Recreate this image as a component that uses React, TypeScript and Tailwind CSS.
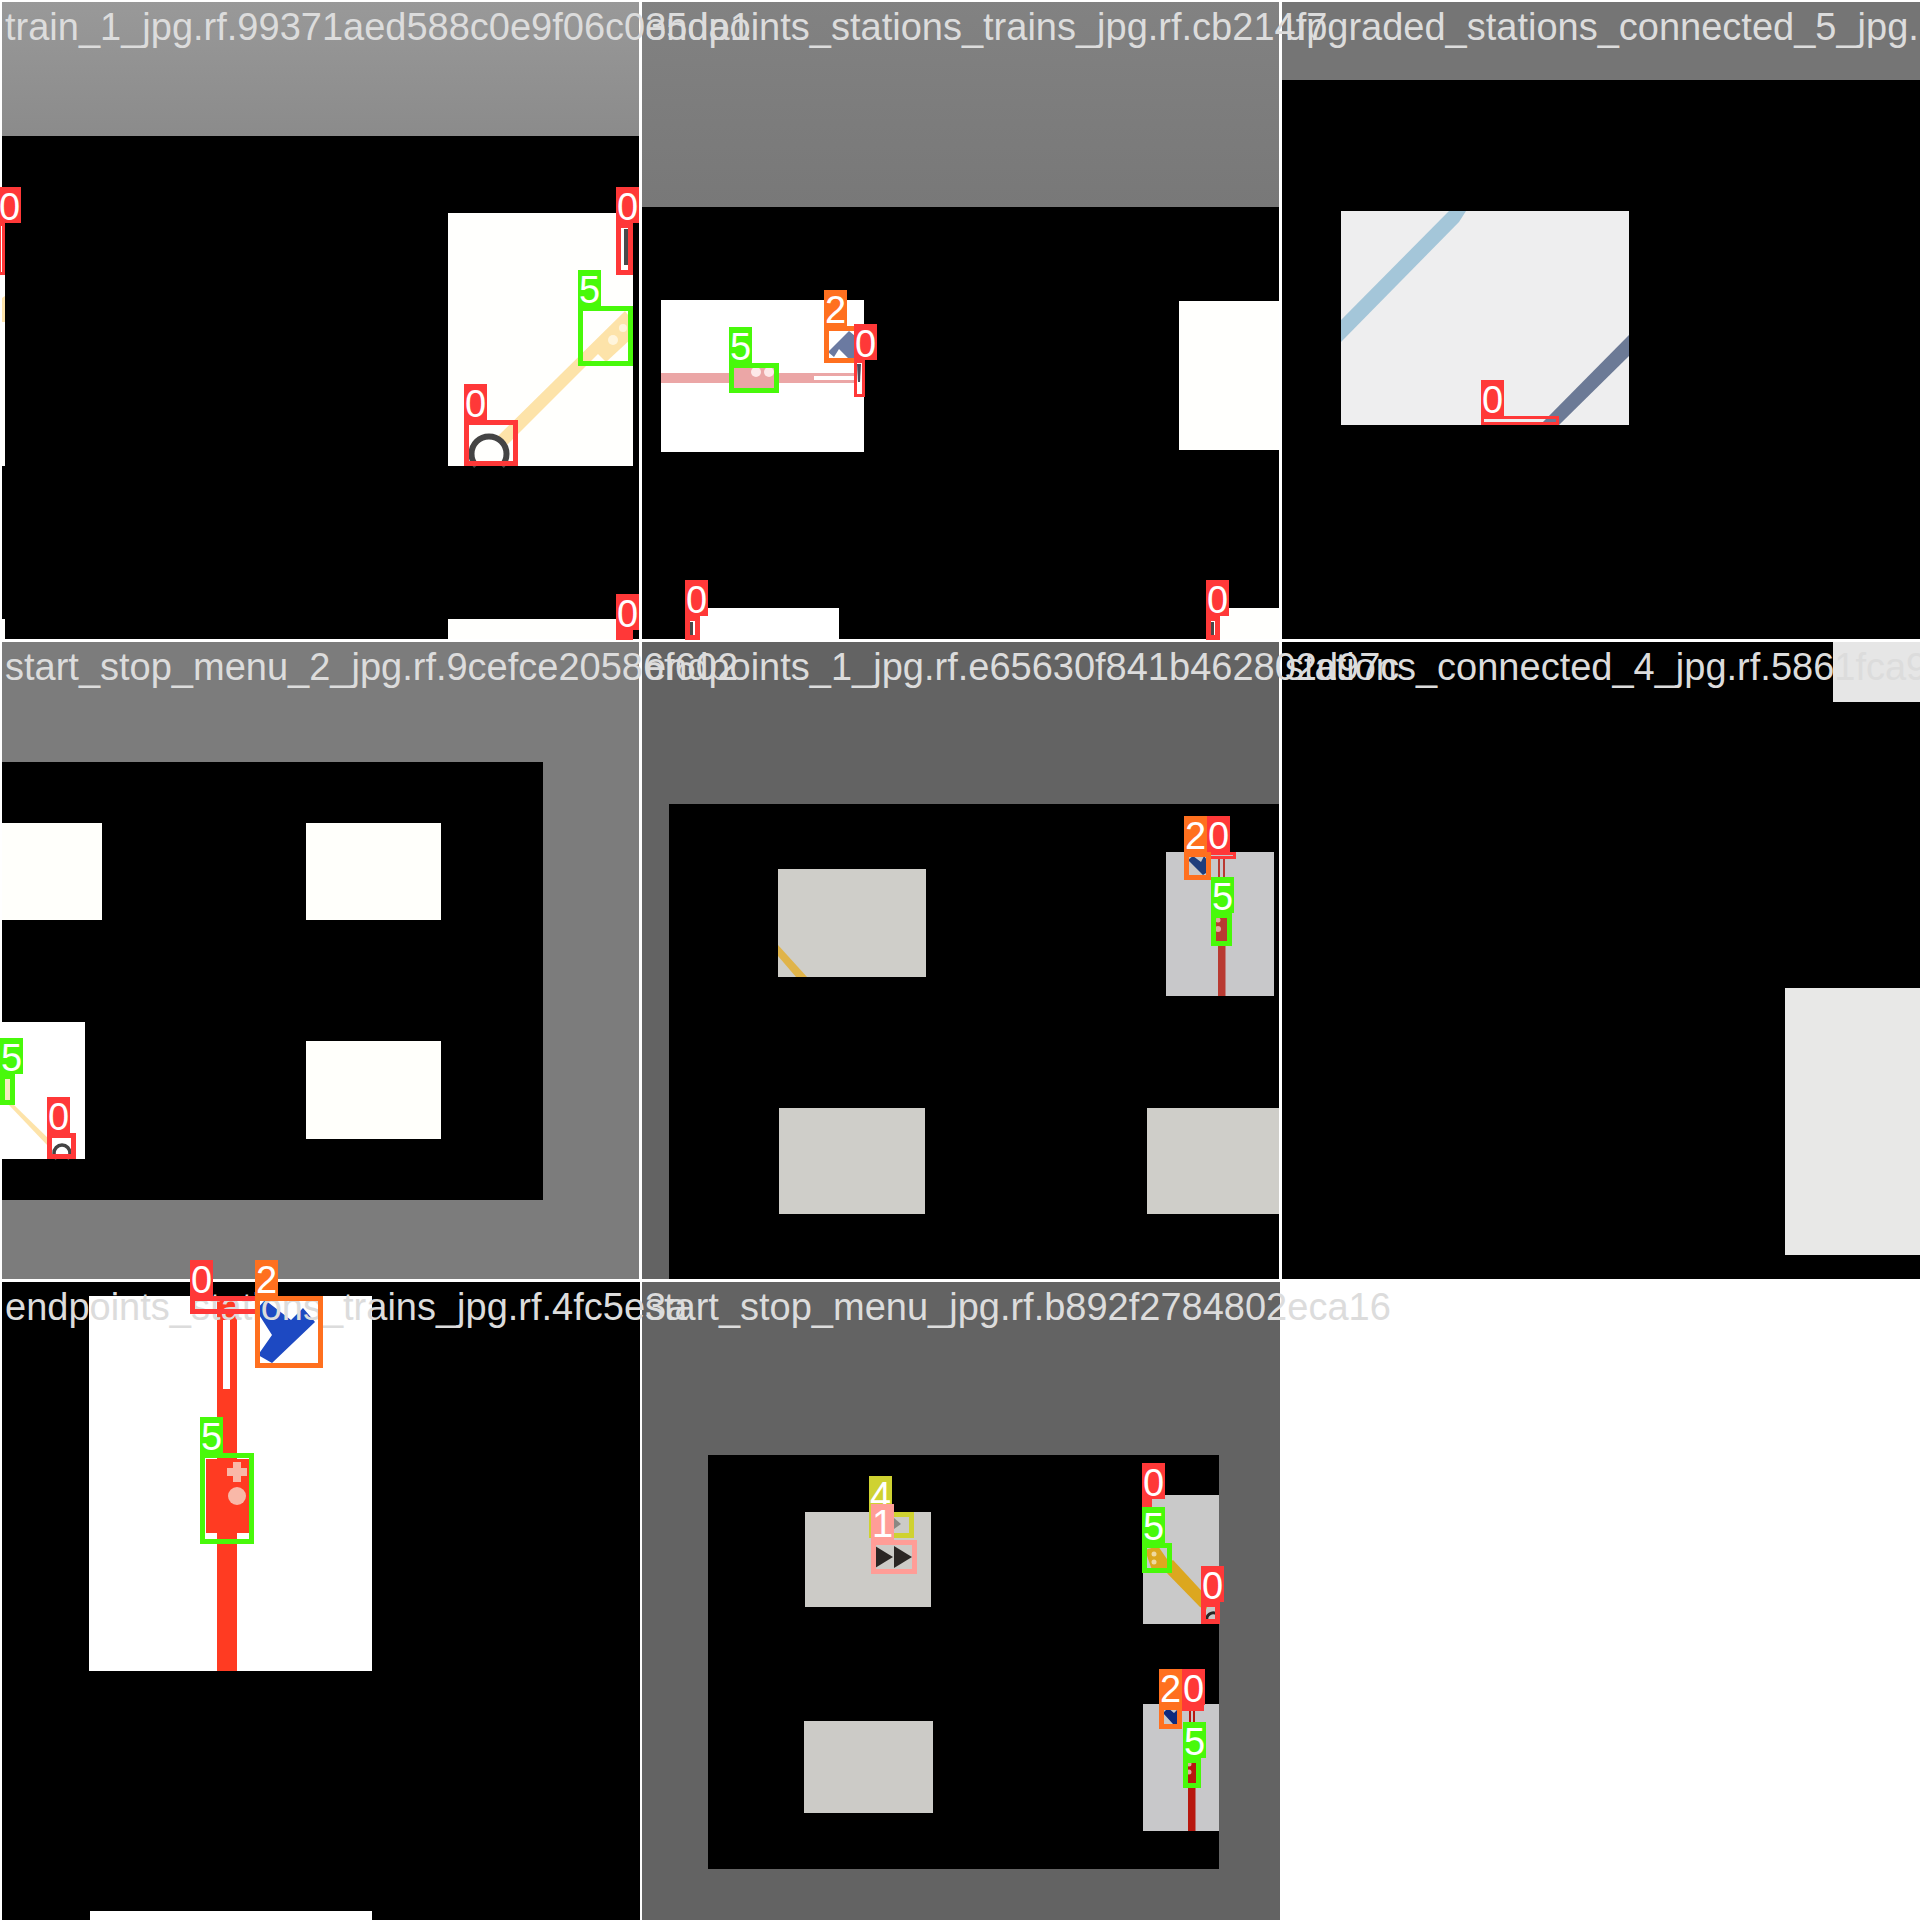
const RED = { box: 'border-[#ff3838]', tag: 'bg-[#ff3838]' };
const GREEN = { box: 'border-[#48f90a]', tag: 'bg-[#48f90a]' };
const ORANGE = { box: 'border-[#ff701f]', tag: 'bg-[#ff701f]' };
const YELLOW = { box: 'border-[#cfd231]', tag: 'bg-[#cfd231]' };
const PINK = { box: 'border-[#ff9d97]', tag: 'bg-[#ff9d97]' };

type Tone = { box: string; tag: string };

function Det({ n, tone, className, thin }: { n: number; tone: Tone; className: string; thin?: boolean }) {
  const wall = thin ? 'border-[3px]' : 'border-[5px]';
  const place = thin ? 'left-[-3px] top-[-39px]' : 'left-[-5px] top-[-41px]';
  return (
    <div className={`absolute ${wall} ${tone.box} ${className}`}>
      <span className={`absolute h-[36px] w-[23px] text-center text-[38px] leading-[41px] text-white ${place} ${tone.tag}`}>
        {n}
      </span>
    </div>
  );
}

function Title({ children }: { children: string }) {
  return (
    <div className="absolute left-[5px] top-[7px] whitespace-nowrap text-[38px] leading-[40px] text-[#dcdcdc]">
      {children}
    </div>
  );
}

function Sheet({ className }: { className: string }) {
  return <div className={`absolute ${className}`} />;
}

function Paint({ children }: { children: React.ReactNode }) {
  return (
    <svg className="absolute left-0 top-0 h-[640px] w-[640px]" viewBox="0 0 640 640">
      {children}
    </svg>
  );
}

function Cell({ picture, marks, frame }: { picture: React.ReactNode; marks?: React.ReactNode; frame: string }) {
  return (
    <div className="relative h-[640px] w-[640px]">
      <div className="absolute inset-0 overflow-hidden bg-black">
        {picture}
        <div className={`absolute inset-0 border-l-2 border-t-2 border-white ${frame}`} />
      </div>
      <div className="absolute inset-0 z-10">{marks}</div>
    </div>
  );
}

function TrainOne() {
  return (
    <Cell
      frame="border-r border-b"
      picture={
        <>
          <Sheet className="left-0 top-0 h-[136px] w-full bg-gradient-to-b from-[#999999] to-[#8b8b8b]" />
          <Sheet className="left-[448px] top-[213px] h-[253px] w-[185px] bg-[#fffffd]" />
          <Sheet className="left-0 top-[275px] h-[191px] w-[5px] bg-[#fffffd]" />
          <Sheet className="left-[448px] top-[619px] h-[21px] w-[185px] bg-[#fffffd]" />
          <Sheet className="left-0 top-[619px] h-[21px] w-[5px] bg-[#fffffd]" />
          <Paint>
            <path d="M2 298 L5 296 L5 322 L2 322 Z" fill="#fde3a9" />
            <path d="M498 436 L625 311 L632 320 L506 446 Z" fill="#fde3a9" />
            <path d="M594 350 L626 316 L632 320 L632 338 L606 362 Z" fill="#fde3a9" />
            <circle cx="613" cy="340" r="5" fill="#fff5dc" />
            <circle cx="623" cy="328" r="4" fill="#fff5dc" />
            <path d="M476.3 466 A17.5 17.5 0 1 1 501.7 466" fill="#fffffd" stroke="#444444" strokeWidth="6" />
            <rect x="624" y="229" width="5" height="36" fill="#4a4a4a" />
            <rect x="622" y="631" width="9" height="3" fill="#fffffd" />
          </Paint>
        </>
      }
      marks={
        <>
          <Title>train_1_jpg.rf.99371aed588c0e9f06c035da1</Title>
          <Det n={0} tone={RED} className="left-[464px] top-[420px] h-[46px] w-[54px]" />
          <Det n={5} tone={GREEN} className="left-[578px] top-[306px] h-[60px] w-[55px]" />
          <Det n={0} tone={RED} className="left-[616px] top-[223px] h-[52px] w-[17px]" />
          <Det n={0} tone={RED} thin className="left-[-2px] top-[223px] h-[52px] w-[7px]" />
          <Det n={0} tone={RED} className="left-[616px] top-[630px] h-[10px] w-[17px]" />
        </>
      }
    />
  );
}

function EndpointsStations() {
  return (
    <Cell
      frame="border-r border-b"
      picture={
        <>
          <Sheet className="left-0 top-0 h-[207px] w-full bg-gradient-to-b from-[#828282] to-[#787878]" />
          <Sheet className="left-[21px] top-[300px] h-[152px] w-[203px] bg-white" />
          <Sheet className="left-[539px] top-[301px] h-[149px] w-[101px] bg-[#fffffd]" />
          <Sheet className="left-[49px] top-[608px] h-[32px] w-[150px] bg-white" />
          <Sheet className="left-[570px] top-[608px] h-[32px] w-[70px] bg-[#fffffd]" />
          <Paint>
            <rect x="21" y="373" width="193" height="10" fill="#eba6a6" />
            <rect x="94" y="367" width="41" height="22" fill="#eba6a6" />
            <rect x="174" y="376" width="40" height="4" fill="#ffffff" />
            <circle cx="116" cy="372" r="5" fill="#fde8e8" />
            <circle cx="129" cy="372" r="5" fill="#fde8e8" />
            <path d="M188 352 L209 331 L220 340 L218 358 L208 358 L199 349 L194 357 Z" fill="#6b7aa1" />
            <rect x="216" y="362" width="7" height="33" fill="#ffffff" />
            <path d="M217 364 L221 364 L220 382 L218 382 Z" fill="#4a4a5a" />
            <rect x="50" y="622" width="3" height="14" fill="#4a4a4a" />
            <rect x="571" y="622" width="3" height="14" fill="#4a4a4a" />
          </Paint>
        </>
      }
      marks={
        <>
          <Title>endpoints_stations_trains_jpg.rf.cb214f7</Title>
          <Det n={5} tone={GREEN} className="left-[89px] top-[363px] h-[30px] w-[50px]" />
          <Det n={2} tone={ORANGE} className="left-[184px] top-[326px] h-[37px] w-[41px]" />
          <Det n={0} tone={RED} thin className="left-[214px] top-[360px] h-[37px] w-[11px]" />
          <Det n={0} tone={RED} className="left-[45px] top-[616px] h-[24px] w-[15px]" />
          <Det n={0} tone={RED} className="left-[566px] top-[616px] h-[24px] w-[14px]" />
        </>
      }
    />
  );
}

function UpgradedFive() {
  return (
    <Cell
      frame="border-b"
      picture={
        <>
          <Sheet className="left-0 top-0 h-[80px] w-full bg-[#757575]" />
          <Sheet className="left-[61px] top-[211px] h-[214px] w-[288px] bg-[#eeeeef]" />
          <Paint>
            <path d="M61 320 L169 211 L186 211 L179 222 L61 342 Z" fill="#a4c6d9" />
            <path d="M349 335 L349 356 L279 425 L260 425 Z" fill="#6c7a96" />
          </Paint>
        </>
      }
      marks={
        <>
          <Title>upgraded_stations_connected_5_jpg.</Title>
          <Det n={0} tone={RED} thin className="left-[201px] top-[416px] h-[9px] w-[78px]" />
        </>
      }
    />
  );
}

function StartStopTwo() {
  return (
    <Cell
      frame="border-r border-b"
      picture={
        <>
          <Sheet className="inset-0 bg-[#7c7c7c]" />
          <Sheet className="left-0 top-[122px] h-[438px] w-[543px] bg-black" />
          <Sheet className="left-0 top-[183px] h-[97px] w-[102px] bg-[#fffffb]" />
          <Sheet className="left-[306px] top-[183px] h-[97px] w-[135px] bg-[#fffffb]" />
          <Sheet className="left-[306px] top-[401px] h-[98px] w-[135px] bg-[#fffffb]" />
          <Sheet className="left-0 top-[382px] h-[137px] w-[85px] bg-white" />
          <Paint>
            <path d="M8 464 L13 464 L52 502 L48 506 Z" fill="#fde3a9" />
            <rect x="5" y="438" width="7" height="23" fill="#f3ecc0" />
            <path d="M56.7 519 A8 8 0 1 1 67.3 519" fill="#ffffff" stroke="#444444" strokeWidth="3.5" />
          </Paint>
        </>
      }
      marks={
        <>
          <Title>start_stop_menu_2_jpg.rf.9cefce20586f602</Title>
          <Det n={5} tone={GREEN} className="left-0 top-[434px] h-[31px] w-[15px]" />
          <Det n={0} tone={RED} className="left-[47px] top-[493px] h-[26px] w-[29px]" />
        </>
      }
    />
  );
}

function EndpointsOne() {
  return (
    <Cell
      frame="border-r border-b"
      picture={
        <>
          <Sheet className="left-0 top-0 h-full w-[29px] bg-[#636363]" />
          <Sheet className="left-0 top-0 h-[164px] w-full bg-[#636363]" />
          <Sheet className="left-[138px] top-[229px] h-[108px] w-[148px] bg-[#cfcec9]" />
          <Sheet className="left-[139px] top-[468px] h-[106px] w-[146px] bg-[#cfcec9]" />
          <Sheet className="left-[507px] top-[468px] h-[106px] w-[133px] bg-[#cfcec9]" />
          <Sheet className="left-[526px] top-[212px] h-[144px] w-[108px] bg-[#c8c8ca]" />
          <Paint>
            <path d="M138 305 L138 316 L156 337 L167 337 Z" fill="#e0b44a" />
            <rect x="578" y="219" width="2" height="20" fill="#b93a32" />
            <rect x="583" y="219" width="2" height="20" fill="#b93a32" />
            <rect x="578" y="300" width="7.5" height="56" fill="#b93a32" />
            <rect x="575" y="277" width="13" height="27" fill="#b93a32" />
            <circle cx="578" cy="280" r="2.5" fill="#dfa9a0" />
            <circle cx="578" cy="289" r="3" fill="#dfa9a0" />
            <path d="M548 220 L553 216 L561 222 L564 216 L567 220 L566 233 L563 235 Z" fill="#1f3d7c" />
          </Paint>
        </>
      }
      marks={
        <>
          <Title>endpoints_1_jpg.rf.e65630f841b462802d97c</Title>
          <Det n={0} tone={RED} thin className="left-[567px] top-[212px] h-[7px] w-[29px]" />
          <Det n={2} tone={ORANGE} className="left-[544px] top-[212px] h-[28px] w-[27px]" />
          <Det n={5} tone={GREEN} className="left-[571px] top-[273px] h-[33px] w-[21px]" />
        </>
      }
    />
  );
}

function StationsFour() {
  return (
    <Cell
      frame="border-b"
      picture={
        <>
          <Sheet className="left-[553px] top-0 h-[62px] w-[87px] bg-[#e6e6e6]" />
          <Sheet className="left-[505px] top-[348px] h-[267px] w-[135px] bg-[#e8e8e7]" />
        </>
      }
      marks={<Title>stations_connected_4_jpg.rf.5861fca9</Title>}
    />
  );
}

function EndpointsTrains() {
  return (
    <Cell
      frame=""
      picture={
        <>
          <Sheet className="left-[89px] top-[16px] h-[375px] w-[283px] bg-white" />
          <Sheet className="left-[90px] top-[631px] h-[9px] w-[282px] bg-white" />
          <Paint>
            <rect x="217" y="16" width="20" height="375" fill="#ff3b22" />
            <rect x="223" y="40" width="7" height="69" fill="#ffffff" />
            <rect x="206" y="179" width="43" height="74" fill="#ff3b22" />
            <path d="M233 182 h8 v6 h6 v8 h-6 v6 h-8 v-6 h-6 v-8 h6 Z" fill="#f9b8a8" />
            <circle cx="237" cy="216" r="9" fill="#f9b8a8" />
            <path d="M258 75 L272 83 L315 42 L303 28 L291 40 L265 20 L256 30 L272 55 Z" fill="#1d49c2" />
          </Paint>
        </>
      }
      marks={
        <>
          <Title>endpoints_stations_trains_jpg.rf.4fc5e3a</Title>
          <Det n={0} tone={RED} className="left-[190px] top-[16px] h-[18px] w-[70px]" />
          <Det n={2} tone={ORANGE} className="left-[255px] top-[16px] h-[72px] w-[68px]" />
          <Det n={5} tone={GREEN} className="left-[200px] top-[173px] h-[91px] w-[54px]" />
        </>
      }
    />
  );
}

function StartStop() {
  return (
    <Cell
      frame=""
      picture={
        <>
          <Sheet className="inset-0 bg-[#636363]" />
          <Sheet className="left-[68px] top-[175px] h-[414px] w-[511px] bg-black" />
          <Sheet className="left-[165px] top-[232px] h-[95px] w-[126px] bg-[#cccbc7]" />
          <Sheet className="left-[164px] top-[441px] h-[92px] w-[129px] bg-[#cccbc7]" />
          <Sheet className="left-[503px] top-[215px] h-[129px] w-[76px] bg-[#c9c9c9]" />
          <Sheet className="left-[503px] top-[424px] h-[127px] w-[76px] bg-[#c8c8ca]" />
          <Paint>
            <path d="M254 238 L261 244 L254 249 Z" fill="#8a8883" />
            <path d="M235 266 L253 277 L235 288 Z" fill="#2b2624" />
            <path d="M254 266 L272 277 L254 288 Z" fill="#2b2624" />
            <path d="M533 280 L570 320 L566 330 L560 327 L522 288 Z" fill="#dca71f" />
            <path d="M505 270 L518 266 L529 282 L523 292 L512 290 Z" fill="#dca71f" />
            <circle cx="514" cy="274" r="2.5" fill="#eed9a0" />
            <circle cx="514" cy="282" r="2.5" fill="#eed9a0" />
            <path d="M567 341 A6.5 6.5 0 0 1 577 334" fill="none" stroke="#2b2624" strokeWidth="3" />
            <rect x="549" y="431" width="2" height="16" fill="#b8180f" />
            <rect x="553" y="431" width="2" height="16" fill="#b8180f" />
            <rect x="548" y="500" width="7.5" height="51" fill="#b8180f" />
            <rect x="546" y="481" width="12" height="24" fill="#b8180f" />
            <circle cx="549" cy="484" r="2.5" fill="#dfa9a0" />
            <circle cx="549" cy="492" r="2.5" fill="#dfa9a0" />
            <path d="M523 433 L528 428 L534 433 L537 430 L537 444 L533 444 Z" fill="#0e2a7e" />
          </Paint>
        </>
      }
      marks={
        <>
          <Title>start_stop_menu_jpg.rf.b892f2784802eca16</Title>
          <Det n={4} tone={YELLOW} className="left-[229px] top-[232px] h-[26px] w-[45px]" />
          <Det n={1} tone={PINK} className="left-[231px] top-[260px] h-[34px] w-[46px]" />
          <Det n={0} tone={RED} className="left-[502px] top-[219px] h-[10px] w-[10px]" />
          <Det n={5} tone={GREEN} className="left-[502px] top-[263px] h-[30px] w-[30px]" />
          <Det n={0} tone={RED} className="left-[561px] top-[322px] h-[22px] w-[19px]" />
          <Det n={2} tone={ORANGE} className="left-[519px] top-[425px] h-[24px] w-[23px]" />
          <Det n={0} tone={RED} thin className="left-[542px] top-[425px] h-[6px] w-[22px]" />
          <Det n={5} tone={GREEN} className="left-[543px] top-[478px] h-[30px] w-[18px]" />
        </>
      }
    />
  );
}

export default function App() {
  return (
    <div className="grid h-[1920px] w-[1920px] grid-cols-[repeat(3,640px)] grid-rows-[repeat(3,640px)] overflow-hidden bg-white font-['Liberation_Sans',Arial,sans-serif]">
      <TrainOne />
      <EndpointsStations />
      <UpgradedFive />
      <StartStopTwo />
      <EndpointsOne />
      <StationsFour />
      <EndpointsTrains />
      <StartStop />
    </div>
  );
}
